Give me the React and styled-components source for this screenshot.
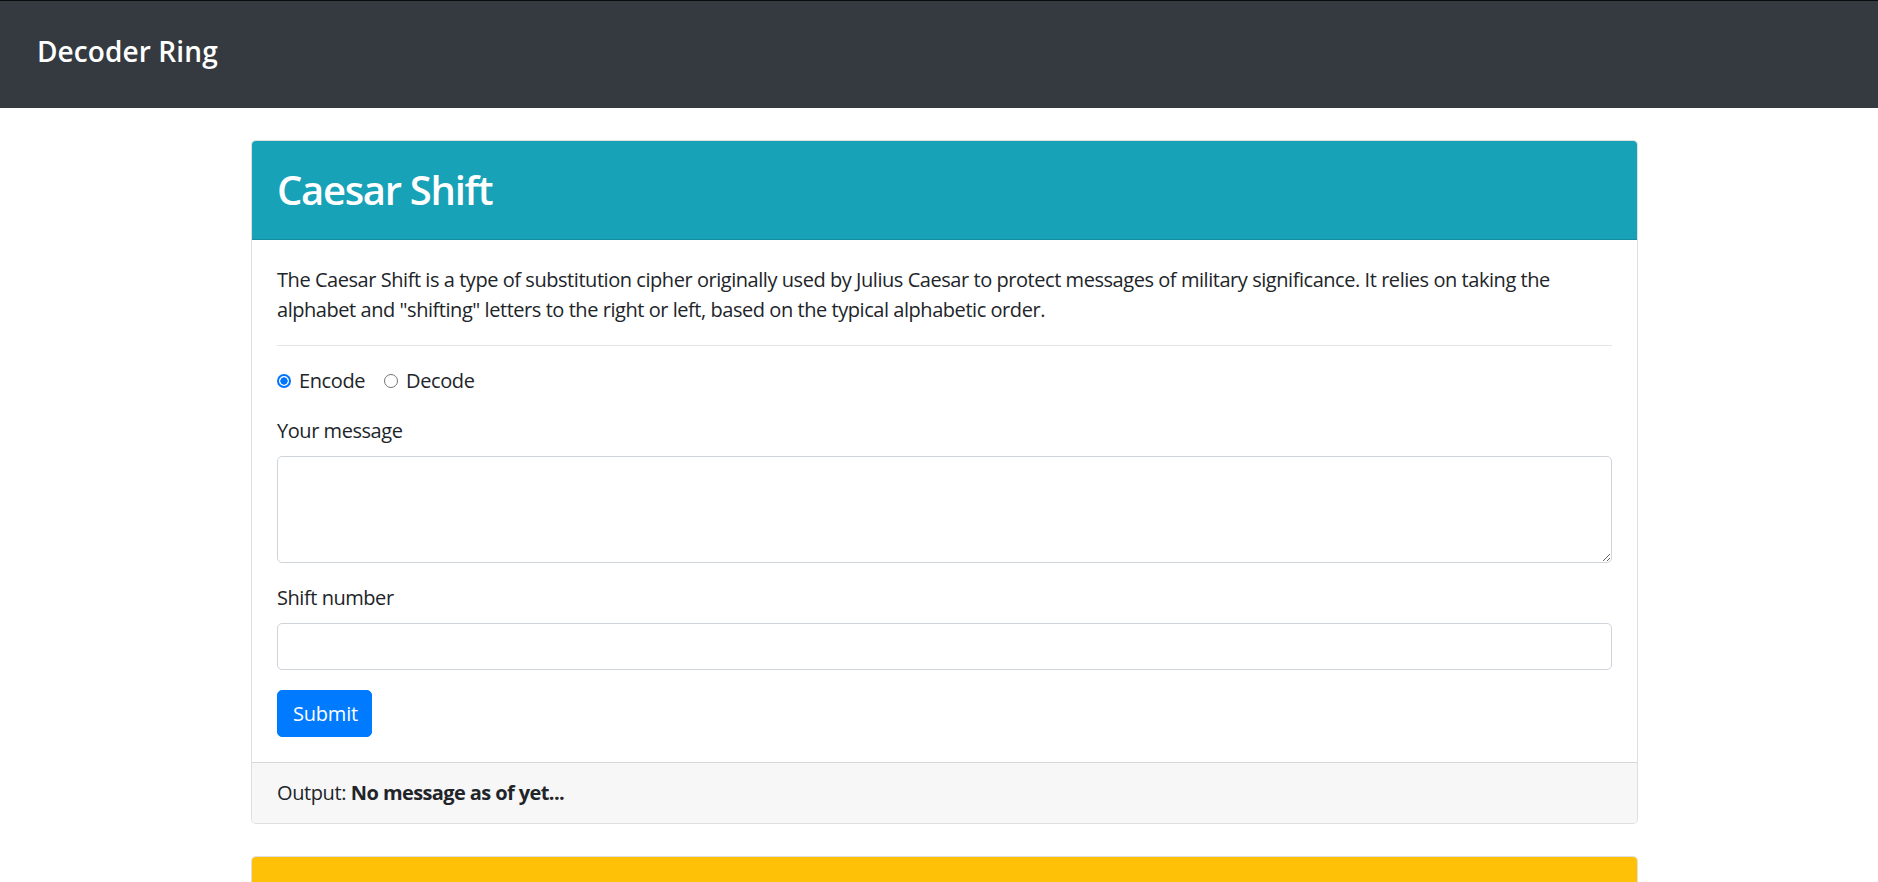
import React from "react";
import styled, { createGlobalStyle } from "styled-components";

const GlobalStyle = createGlobalStyle`
  * { box-sizing: border-box; }
  body {
    margin: 0;
    font-family: "Open Sans", "Noto Sans", Arial, sans-serif;
    font-size: 20px;
    line-height: 30px;
    color: #212529;
    background: #fff;
  }
`;

const Navbar = styled.nav`
  height: 108px;
  border-top: 1px solid #0b0c0e;
  background: #343a40;
  display: flex;
  align-items: center;
  padding: 0 37px;
`;

const Brand = styled.a`
  color: #fff;
  font-size: 28px;
  font-weight: 600;
  line-height: 36px;
  margin-bottom: 7px;
  text-decoration: none;
  letter-spacing: 0.1px;
`;

const Main = styled.main`
  width: 1387px;
  margin-left: calc(50% - 688px);
  padding-top: 32px;
  display: flex;
  flex-direction: column;
  gap: 32px;
`;

const Card = styled.section`
  border: 1px solid rgba(0, 0, 0, 0.125);
  border-radius: 5px;
  overflow: hidden;
  background: #fff;
`;

const CardHeader = styled.header`
  background: ${(p) => p.$bg};
  color: ${(p) => p.$fg};
  min-height: 99px;
  padding: 15px 25px;
  border-bottom: 1px solid rgba(0, 0, 0, 0.125);
`;

const Title = styled.h2`
  margin: 0;
  font-size: 40px;
  font-weight: 600;
  line-height: 68px;
  letter-spacing: -1.3px;
`;

const CardBody = styled.div`
  padding: 25px;
`;

const Intro = styled.p`
  margin: 0 0 20px;
  letter-spacing: -0.45px;
`;

const Divider = styled.hr`
  margin: 0 0 20px;
  border: 0;
  border-top: 1px solid rgba(0, 0, 0, 0.1);
`;

const Form = styled.form`
  display: flex;
  flex-direction: column;
  gap: 20px;
  align-items: flex-start;
`;

const RadioRow = styled.div`
  display: flex;
  align-items: center;
  height: 30px;
  gap: 19px;
`;

const RadioLabel = styled.label`
  display: inline-flex;
  align-items: center;
  gap: 8px;
  letter-spacing: -0.4px;
`;

const Radio = styled.input.attrs({ type: "radio" })`
  appearance: none;
  margin: 0;
  width: 14px;
  height: 14px;
  border-radius: 50%;
  border: 1px solid #767676;
  background: #fff;
  &:checked {
    border: 2px solid #0075ff;
    background: radial-gradient(circle, #0075ff 0 3.4px, #fff 3.9px);
  }
`;

const Field = styled.div`
  width: 100%;
  display: flex;
  flex-direction: column;
  gap: 10px;
`;

const Label = styled.label`
  letter-spacing: -0.45px;
`;

const TextArea = styled.textarea`
  width: 100%;
  height: 107px;
  padding: 7.5px 15px;
  font: inherit;
  color: #495057;
  border: 1px solid #ced4da;
  border-radius: 5px;
  resize: vertical;
  display: block;
`;

const Input = styled.input`
  width: 100%;
  height: 47px;
  padding: 7.5px 15px;
  font: inherit;
  color: #495057;
  border: 1px solid #ced4da;
  border-radius: 5px;
  display: block;
`;

const Button = styled.button`
  background: #007bff;
  color: #fff;
  border: 1px solid #007bff;
  border-radius: 5px;
  padding: 7.5px 15px;
  font: inherit;
  line-height: 30px;
  width: 95px;
  letter-spacing: -0.2px;
  cursor: pointer;
`;

const CardFooter = styled.footer`
  background: #f7f7f7;
  border-top: 1px solid rgba(0, 0, 0, 0.125);
  padding: 15px 25px;
  letter-spacing: -0.4px;
`;

const Strong = styled.strong`
  font-weight: 700;
  letter-spacing: -0.6px;
`;

export default function App() {
  return (
    <>
      <GlobalStyle />
      <Navbar>
        <Brand href="#">Decoder Ring</Brand>
      </Navbar>
      <Main>
        <Card>
          <CardHeader $bg="#17a2b8" $fg="#fff">
            <Title>Caesar Shift</Title>
          </CardHeader>
          <CardBody>
            <Intro>
              The Caesar Shift is a type of substitution cipher originally used by Julius Caesar to
              protect messages of military significance. It relies on taking the
              <br />
              alphabet and "shifting" letters to the right or left, based on the typical alphabetic
              order.
            </Intro>
            <Divider />
            <Form onSubmit={(e) => e.preventDefault()}>
              <RadioRow>
                <RadioLabel>
                  <Radio name="mode" defaultChecked />
                  Encode
                </RadioLabel>
                <RadioLabel>
                  <Radio name="mode" />
                  Decode
                </RadioLabel>
              </RadioRow>
              <Field>
                <Label htmlFor="message">Your message</Label>
                <TextArea id="message" rows={3} />
              </Field>
              <Field>
                <Label htmlFor="shift">Shift number</Label>
                <Input id="shift" type="number" />
              </Field>
              <Button type="submit">Submit</Button>
            </Form>
          </CardBody>
          <CardFooter>
            Output: <Strong>No message as of yet...</Strong>
          </CardFooter>
        </Card>
        <Card>
          <CardHeader $bg="#ffc107" $fg="#212529" />
          <CardBody />
        </Card>
      </Main>
    </>
  );
}
